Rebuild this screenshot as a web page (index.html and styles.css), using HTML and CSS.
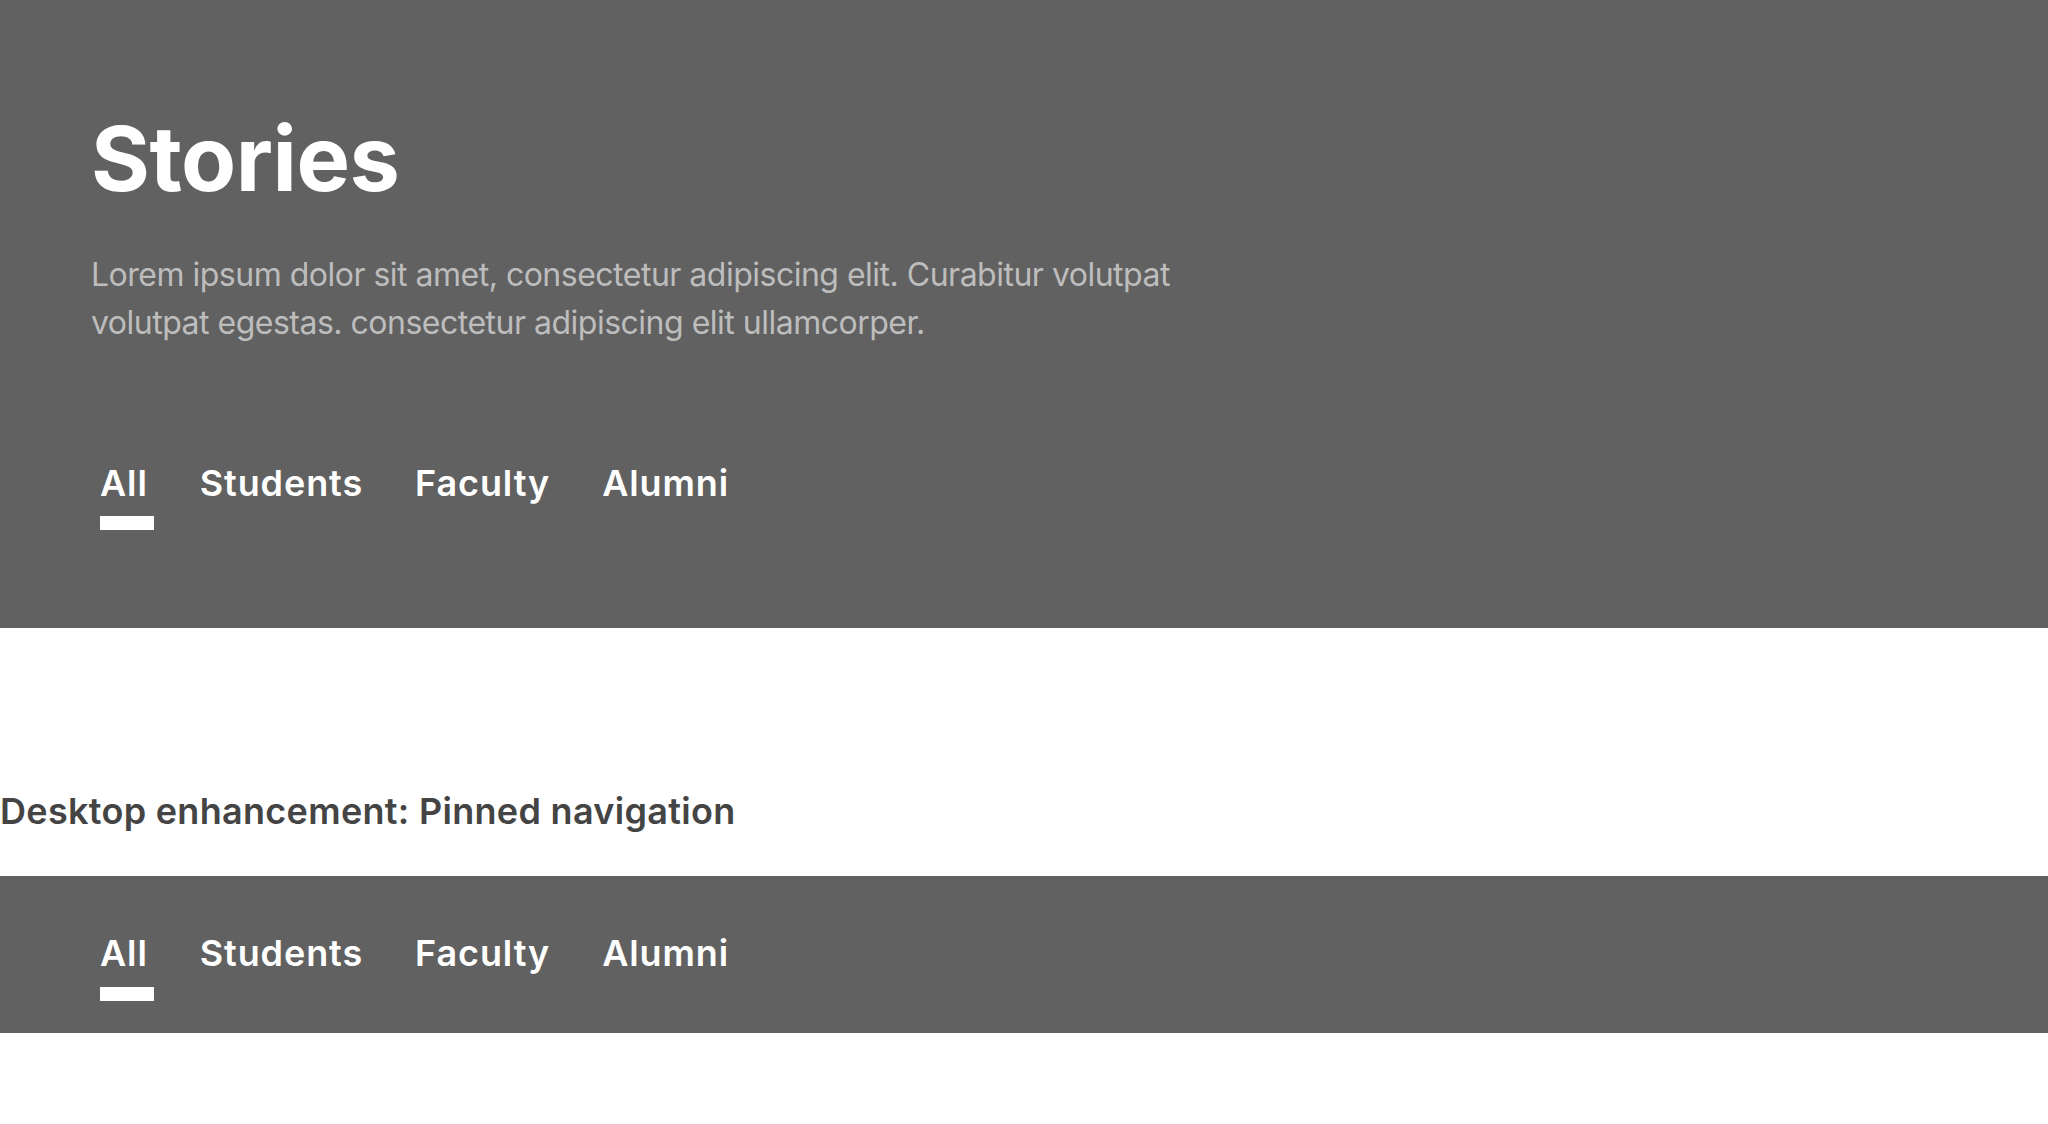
FILE: index.html
```html
<!DOCTYPE html>
<html lang="en">
<head>
<meta charset="utf-8">
<title>Stories</title>
<link rel="stylesheet" href="styles.css">
</head>
<body>
<header class="hero">
  <div class="hero-intro">
    <h1 class="hero-title">Stories</h1>
    <p class="hero-text">Lorem ipsum dolor sit amet, consectetur adipiscing elit. Curabitur volutpat volutpat egestas. consectetur adipiscing elit ullamcorper.</p>
  </div>
  <nav class="tabs">
    <a class="tab is-active" href="#">All</a>
    <a class="tab" href="#">Students</a>
    <a class="tab" href="#">Faculty</a>
    <a class="tab" href="#">Alumni</a>
  </nav>
</header>
<section class="demo">
  <h2 class="demo-title">Desktop enhancement: Pinned navigation</h2>
  <div class="pinned">
    <nav class="tabs">
      <a class="tab is-active" href="#">All</a>
      <a class="tab" href="#">Students</a>
      <a class="tab" href="#">Faculty</a>
      <a class="tab" href="#">Alumni</a>
    </nav>
  </div>
</section>
</body>
</html>
```

FILE: styles.css
```css
html, body {
  margin: 0;
  padding: 0;
  background: #ffffff;
  font-family: "Inter", "Liberation Sans", sans-serif;
}

.hero {
  background: #616161;
  color: #ffffff;
  padding: 105px 91px 98px;
}

.hero-title {
  margin: 0;
  font-size: 90px;
  line-height: 1.2;
  font-weight: 700;
  letter-spacing: -0.5px;
}

.hero-text {
  margin: 38px 0 0;
  max-width: 1120px;
  font-size: 32px;
  line-height: 48px;
  font-weight: 400;
  color: #bdbdbd;
  letter-spacing: -0.5px;
}

.tabs {
  display: flex;
  gap: 52px;
  padding-left: 9px;
}

.hero .tabs {
  margin-top: 115px;
}

.tab {
  position: relative;
  color: #ffffff;
  text-decoration: none;
  font-size: 36px;
  line-height: 1.2;
  font-weight: 600;
  letter-spacing: 0.9px;
  padding-bottom: 25px;
}

.tab.is-active::after {
  content: "";
  position: absolute;
  left: 0;
  bottom: 0;
  width: 54px;
  height: 14px;
  background: #ffffff;
}

.demo {
  padding-top: 162px;
}

.demo-title {
  margin: 0;
  font-size: 36px;
  line-height: 1.2;
  font-weight: 600;
  color: #444444;
  letter-spacing: 0.3px;
}

.pinned {
  margin-top: 43px;
  background: #616161;
  padding: 56px 91px 32px;
}
```
